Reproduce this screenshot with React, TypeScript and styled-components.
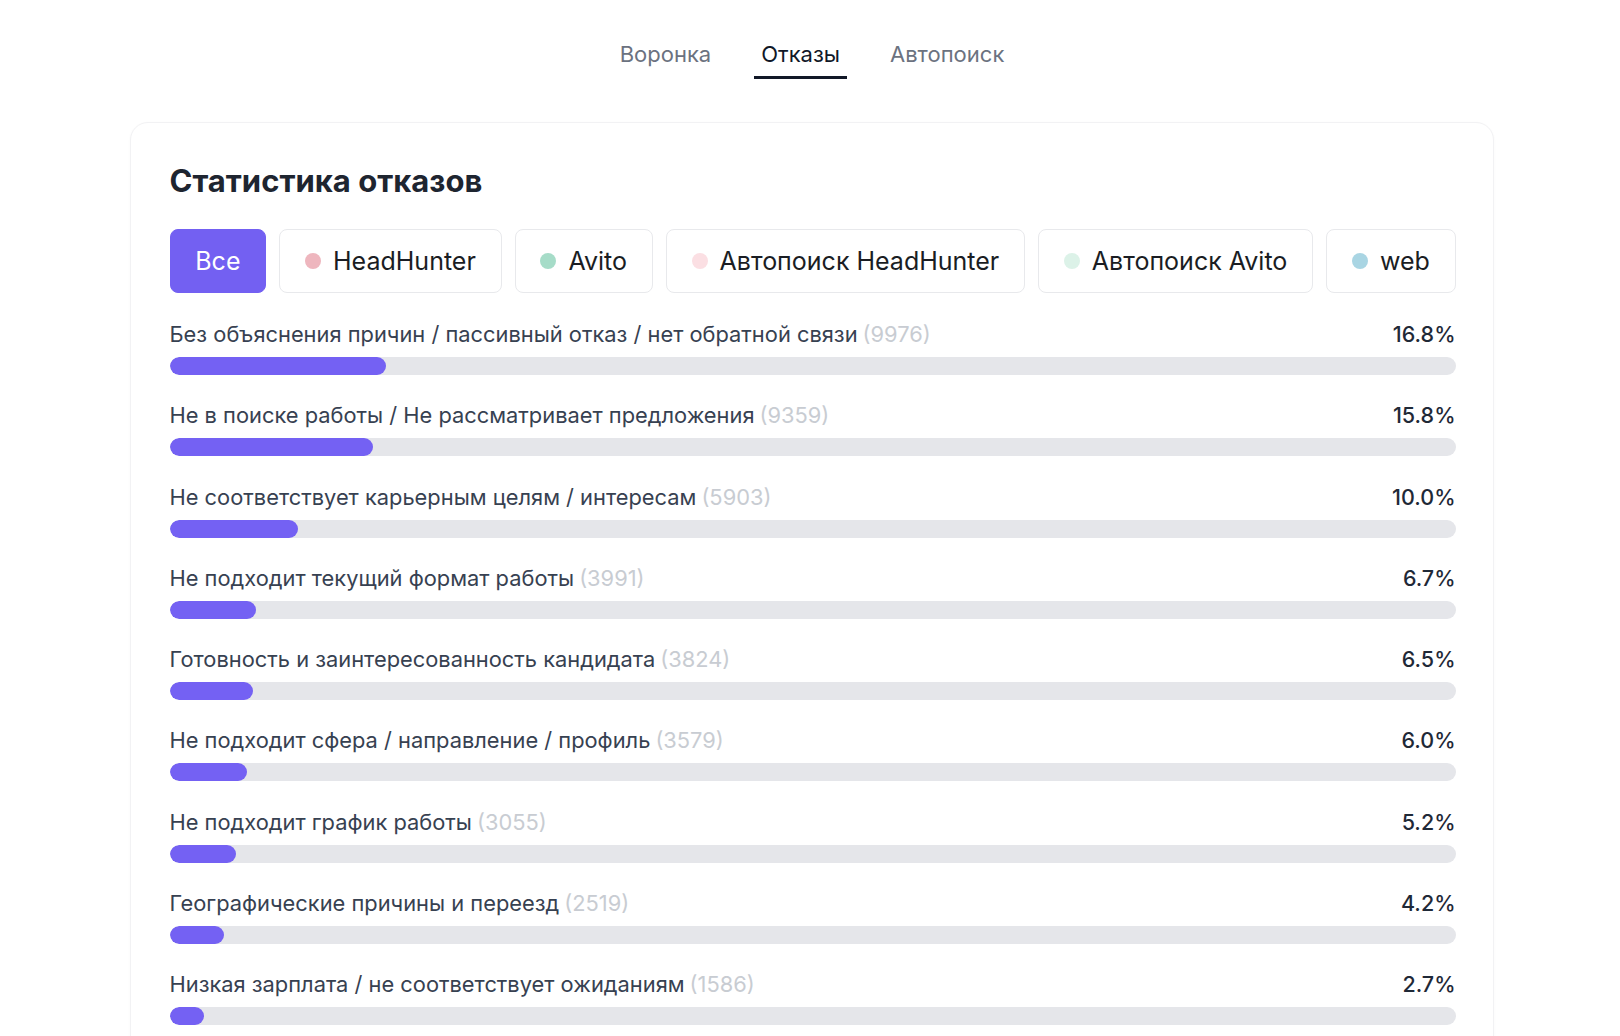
import { useState } from 'react';
import styled, { createGlobalStyle } from 'styled-components';

const GlobalStyle = createGlobalStyle`
  * { box-sizing: border-box; }
  body {
    margin: 0;
    background: #ffffff;
    font-family: Inter, "Noto Sans", "Liberation Sans", sans-serif;
    color: #1f2937;
  }
`;

const Page = styled.div`
  padding-top: 40px;
  display: flex;
  flex-direction: column;
  align-items: center;
`;

const Tabs = styled.nav`
  display: flex;
  justify-content: center;
  gap: 36px;
  margin-bottom: 43px;
  padding-left: 4px;
`;

const Tab = styled.button<{ $active?: boolean }>`
  background: none;
  border: none;
  padding: 0 7px 8px;
  font-family: inherit;
  font-size: 22px;
  line-height: 28px;
  color: ${({ $active }) => ($active ? '#111827' : '#6b7280')};
  border-bottom: 3px solid ${({ $active }) => ($active ? '#111827' : 'transparent')};
  cursor: pointer;
`;

const Card = styled.section`
  width: 1364px;
  margin-left: 3px;
  background: #fff;
  border: 1px solid #f2f2f4;
  border-radius: 18px;
  padding: 40px 37px 40px 39px;
  box-shadow: 0 1px 3px rgba(17, 24, 39, 0.03);
`;

const Title = styled.h2`
  margin: 0 0 30px;
  font-size: 31px;
  line-height: 36px;
  font-weight: 700;
  color: #1e2530;
`;

const Filters = styled.div`
  display: flex;
  gap: 13px;
  margin-bottom: 25px;
`;

const Chip = styled.button<{ $active?: boolean }>`
  flex: 1 1 auto;
  height: 64px;
  display: inline-flex;
  align-items: center;
  justify-content: center;
  gap: 12px;
  padding: 0 22px;
  border-radius: 8px;
  border: 1px solid ${({ $active }) => ($active ? '#7360f2' : '#e8e9ec')};
  background: ${({ $active }) => ($active ? '#7360f2' : '#fff')};
  color: ${({ $active }) => ($active ? '#fff' : '#1a1d23')};
  font-family: inherit;
  font-size: 25px;
  white-space: nowrap;
  cursor: pointer;
`;

const Dot = styled.span<{ $color: string }>`
  width: 16px;
  height: 16px;
  border-radius: 50%;
  background: ${({ $color }) => $color};
  flex-shrink: 0;
`;

const List = styled.div`
  display: flex;
  flex-direction: column;
  gap: 24.3px;
`;

const Row = styled.div`
  display: flex;
  flex-direction: column;
  gap: 7px;
`;

const RowHead = styled.div`
  display: flex;
  justify-content: space-between;
  align-items: baseline;
  font-size: 21.85px;
  line-height: 32px;
`;

const Label = styled.span`
  color: #374151;
`;

const Count = styled.span`
  color: #c8ccd2;
  margin-left: 5px;
`;

const Percent = styled.span`
  color: #1f2937;
  font-weight: 500;
  font-size: 21.5px;
`;

const Track = styled.div`
  height: 18px;
  border-radius: 9px;
  background: #e5e6ea;
  overflow: hidden;
`;

const Fill = styled.div`
  height: 100%;
  border-radius: 9px;
  background: #7461f3;
`;

const sources = [
  { id: 'hh', label: 'HeadHunter', color: '#eeb6be' },
  { id: 'avito', label: 'Avito', color: '#a6dcc8' },
  { id: 'auto-hh', label: 'Автопоиск HeadHunter', color: '#fbdfe3' },
  { id: 'auto-avito', label: 'Автопоиск Avito', color: '#dcf2e8' },
  { id: 'web', label: 'web', color: '#a9d5e3' },
];

const reasons = [
  { label: 'Без объяснения причин / пассивный отказ / нет обратной связи', count: 9976, pct: 16.8 },
  { label: 'Не в поиске работы / Не рассматривает предложения', count: 9359, pct: 15.8 },
  { label: 'Не соответствует карьерным целям / интересам', count: 5903, pct: 10.0 },
  { label: 'Не подходит текущий формат работы', count: 3991, pct: 6.7 },
  { label: 'Готовность и заинтересованность кандидата', count: 3824, pct: 6.5 },
  { label: 'Не подходит сфера / направление / профиль', count: 3579, pct: 6.0 },
  { label: 'Не подходит график работы', count: 3055, pct: 5.2 },
  { label: 'Географические причины и переезд', count: 2519, pct: 4.2 },
  { label: 'Низкая зарплата / не соответствует ожиданиям', count: 1586, pct: 2.7 },
];

export default function App() {
  const [tab, setTab] = useState('rejects');
  const [source, setSource] = useState('all');

  return (
    <>
      <GlobalStyle />
      <Page>
        <Tabs>
          <Tab $active={tab === 'funnel'} onClick={() => setTab('funnel')}>Воронка</Tab>
          <Tab $active={tab === 'rejects'} onClick={() => setTab('rejects')}>Отказы</Tab>
          <Tab $active={tab === 'auto'} onClick={() => setTab('auto')}>Автопоиск</Tab>
        </Tabs>

        <Card>
          <Title>Статистика отказов</Title>

          <Filters>
            <Chip $active={source === 'all'} onClick={() => setSource('all')}>Все</Chip>
            {sources.map((s) => (
              <Chip key={s.id} $active={source === s.id} onClick={() => setSource(s.id)}>
                <Dot $color={s.color} />
                {s.label}
              </Chip>
            ))}
          </Filters>

          <List>
            {reasons.map((r) => (
              <Row key={r.label}>
                <RowHead>
                  <Label>
                    {r.label}
                    <Count>({r.count})</Count>
                  </Label>
                  <Percent>{r.pct.toFixed(1)}%</Percent>
                </RowHead>
                <Track>
                  <Fill style={{ width: `${r.pct}%` }} />
                </Track>
              </Row>
            ))}
          </List>
        </Card>
      </Page>
    </>
  );
}
